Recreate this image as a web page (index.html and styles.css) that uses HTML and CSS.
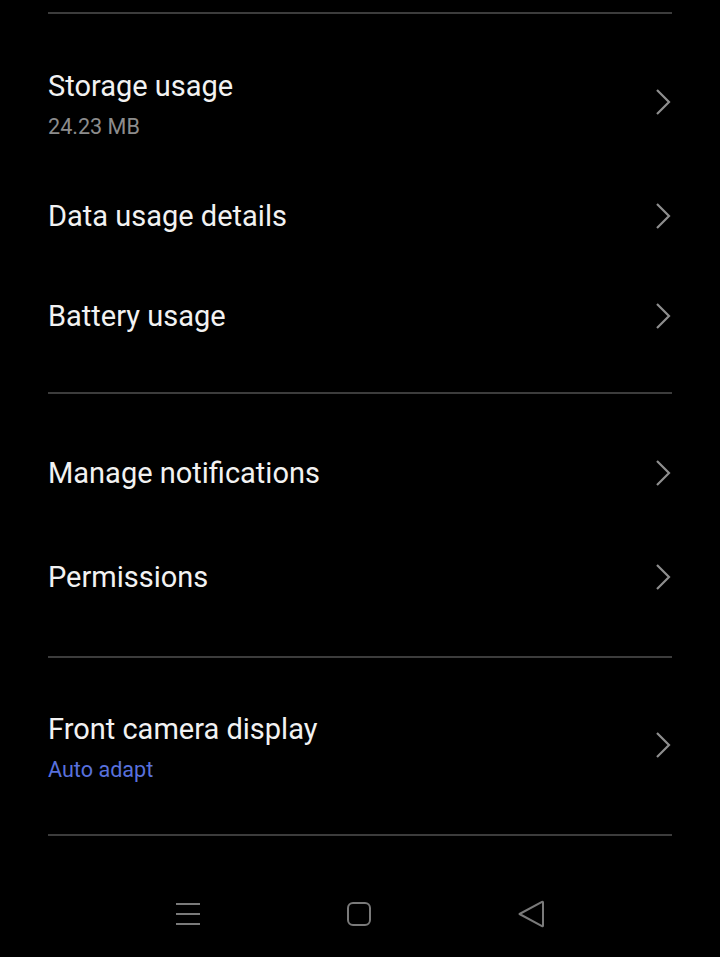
FILE: index.html
```html
<!DOCTYPE html>
<html lang="en">
<head>
    <meta charset="UTF-8">
    <meta name="viewport" content="width=device-width, initial-scale=1.0">
    <title>App info</title>
    <link rel="stylesheet" href="styles.css">
</head>
<body>
<div class="screen">
    <div class="divider"></div>

    <div class="group group-one">
        <div class="row row-tall">
            <div class="row-text">
                <div class="title">Storage usage</div>
                <div class="summary">24.23 MB</div>
            </div>
            <svg class="chevron" viewBox="0 0 16 28"><path d="M2 2 L14 14 L2 26"/></svg>
        </div>
        <div class="row">
            <div class="title">Data usage details</div>
            <svg class="chevron" viewBox="0 0 16 28"><path d="M2 2 L14 14 L2 26"/></svg>
        </div>
        <div class="row">
            <div class="title">Battery usage</div>
            <svg class="chevron" viewBox="0 0 16 28"><path d="M2 2 L14 14 L2 26"/></svg>
        </div>
    </div>

    <div class="divider"></div>

    <div class="group group-two">
        <div class="row row-mid">
            <div class="title">Manage notifications</div>
            <svg class="chevron" viewBox="0 0 16 28"><path d="M2 2 L14 14 L2 26"/></svg>
        </div>
        <div class="row row-mid">
            <div class="title">Permissions</div>
            <svg class="chevron" viewBox="0 0 16 28"><path d="M2 2 L14 14 L2 26"/></svg>
        </div>
    </div>

    <div class="divider"></div>

    <div class="group group-three">
        <div class="row row-tall">
            <div class="row-text">
                <div class="title">Front camera display</div>
                <div class="summary accent">Auto adapt</div>
            </div>
            <svg class="chevron" viewBox="0 0 16 28"><path d="M2 2 L14 14 L2 26"/></svg>
        </div>
    </div>

    <div class="divider"></div>
</div>

<nav class="navbar">
    <svg class="nav-icon" viewBox="0 0 24 24"><path d="M0 2 H24 M0 12 H24 M0 22 H24"/></svg>
    <svg class="nav-icon" viewBox="0 0 24 24"><rect x="1" y="1" width="22" height="22" rx="5"/></svg>
    <svg class="nav-icon nav-back" viewBox="0 0 26 28"><path d="M1.5 14 L24 1.8 Q25 1.3 25 2.6 L25 25.4 Q25 26.7 24 26.2 Z" stroke-linejoin="round"/></svg>
</nav>
</body>
</html>
```

FILE: styles.css
```css
body {
    margin: 0;
    padding: 0;
    background: #000000;
    font-family: Roboto, "Noto Sans", sans-serif;
    color: #f2f2f2;
    width: 720px;
    height: 957px;
    overflow: hidden;
}

.screen {
    padding: 12px 48px 0 48px;
}

.divider {
    height: 2px;
    background: #3c3c3c;
}

.group-one {
    padding: 24px 0 26px;
}

.group-two {
    padding: 27px 0 27px;
}

.group-three {
    padding: 23px 0 25px;
}

.row {
    display: flex;
    align-items: center;
    justify-content: space-between;
    height: 100px;
}

.row-mid {
    height: 104px;
}

.row-tall {
    height: 128px;
}

.row-text {
    display: flex;
    flex-direction: column;
    padding-top: 6px;
}

.title {
    font-size: 29px;
    line-height: 34px;
    color: #f2f2f2;
}

.summary {
    font-size: 21.6px;
    line-height: 28px;
    margin-top: 10px;
    color: #8c8c8c;
}

.summary.accent {
    color: #5870dc;
}

.chevron {
    width: 16px;
    height: 28px;
    margin-right: 1px;
    fill: none;
    stroke: #8e8e8e;
    stroke-width: 2.2;
}

.navbar {
    display: flex;
    justify-content: center;
    align-items: center;
    gap: 147px;
    margin-top: 64px;
}

.nav-icon {
    width: 24px;
    height: 24px;
    fill: none;
    stroke: #7a7a7a;
    stroke-width: 2;
}

.nav-icon.nav-back {
    width: 26px;
    height: 28px;
}
```
